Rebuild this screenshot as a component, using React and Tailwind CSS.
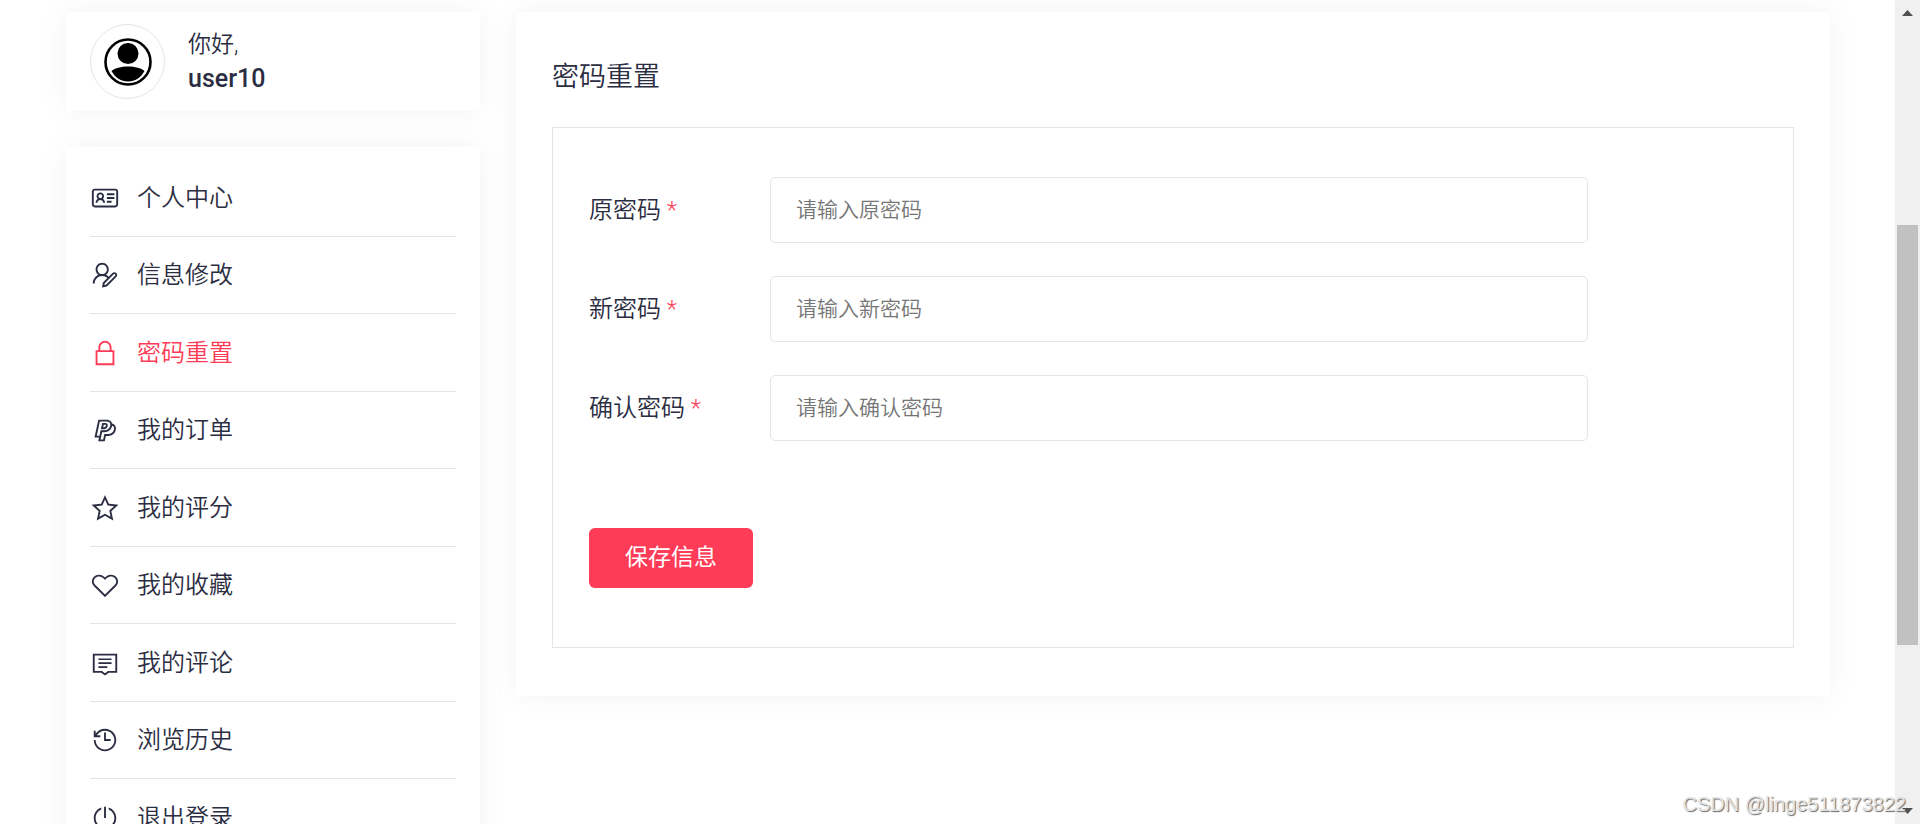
import {
    LiaIdCard, LiaUserEditSolid, LiaLockSolid, LiaPaypal, LiaStar, LiaHeart,
    LiaHistorySolid, LiaPowerOffSolid
} from 'react-icons/lia'

function IconeComentario({ className }) {
    return (
        <svg viewBox="0 0 32 32" className={className} fill="none" stroke="currentColor" strokeWidth="2" aria-hidden="true">
            <path d="M4 7h24v18.500h-8.500L16 28.200l-3.500-2.700H4z" />
            <path d="M9 12h14M9 16.200h14M9 20.300h9.500" strokeWidth="1.800" />
        </svg>
    )
}

const menu = [
    { texto: '个人中心', Icone: LiaIdCard },
    { texto: '信息修改', Icone: LiaUserEditSolid },
    { texto: '密码重置', Icone: LiaLockSolid, ativo: true },
    { texto: '我的订单', Icone: LiaPaypal },
    { texto: '我的评分', Icone: LiaStar },
    { texto: '我的收藏', Icone: LiaHeart },
    { texto: '我的评论', Icone: IconeComentario },
    { texto: '浏览历史', Icone: LiaHistorySolid },
    { texto: '退出登录', Icone: LiaPowerOffSolid }
]

const campos = [
    { id: 'senhaAtual', label: '原密码', placeholder: '请输入原密码' },
    { id: 'senhaNova', label: '新密码', placeholder: '请输入新密码' },
    { id: 'senhaConfirmada', label: '确认密码', placeholder: '请输入确认密码' }
]

function Avatar() {
    return (
        <div className="w-[75px] h-[75px] shrink-0 rounded-full border border-[#e5e5e5] flex items-center justify-center">
            <svg viewBox="0 0 48 48" className="w-12 h-12" aria-hidden="true">
                <circle cx="24" cy="24" r="22.5" fill="none" stroke="#000" strokeWidth="2.6" />
                <circle cx="24" cy="15.5" r="10.5" fill="#000" />
                <path d="M7.500 33C11 30 17 28.500 24 28.500s13 1.500 16.500 4.500C37 39.500 31 43.500 24 43.500S11 39.500 7.500 33z" fill="#000" />
            </svg>
        </div>
    )
}

function Sidebar() {
    return (
        <aside className="w-[414px] shrink-0 space-y-9">
            <div className="bg-white shadow-[0_0_30px_rgba(0,0,0,0.05)] px-6 py-3 flex items-center gap-[23px]">
                <Avatar />
                <div>
                    <p className="text-[23px] leading-[34px] font-[350]">你好,</p>
                    <p className="text-[25px] leading-[34px] font-medium">user10</p>
                </div>
            </div>
            <nav className="bg-white shadow-[0_0_30px_rgba(0,0,0,0.05)] px-6 py-3">
                <ul>
                    {menu.map(({ texto, Icone, ativo }) => (
                        <li key={texto} className="odd:h-[78px] even:h-[77px] border-b border-[#e5e5e5] last:border-b-0">
                            <a href="#" className={ativo ? 'h-full flex items-center gap-[17px] text-[#ff3c57]' : 'h-full flex items-center gap-[17px]'}>
                                <Icone className="w-[30px] h-[30px]" />
                                <span className="text-2xl font-[350]">{texto}</span>
                            </a>
                        </li>
                    ))}
                </ul>
            </nav>
        </aside>
    )
}

function Formulario() {
    return (
        <main className="flex-1 min-w-0 bg-white shadow-[0_0_30px_rgba(0,0,0,0.05)] px-9 pt-[45px] pb-12">
            <h1 className="text-[27px] leading-[40px] font-[350] mb-[30px]">密码重置</h1>
            <form className="border border-[#e5e5e5] px-9 pt-[49px] pb-[59px]" onSubmit={(e) => e.preventDefault()}>
                <div className="space-y-[33px]">
                    {campos.map((campo) => (
                        <div key={campo.id} className="flex items-center">
                            <label htmlFor={campo.id} className="w-[181px] shrink-0 text-2xl font-[350]">
                                {campo.label} <span className="text-[#ff3c57]">*</span>
                            </label>
                            <input
                                id={campo.id}
                                type="password"
                                placeholder={campo.placeholder}
                                className="w-[70%] h-[66px] px-[25px] text-[21px] font-[350] border border-[#e5e5e5] rounded-[5px] outline-none placeholder:text-[#757575]"
                            />
                        </div>
                    ))}
                </div>
                <button className="mt-[87px] h-[60px] px-9 rounded-md bg-[#ff3c57] text-white text-[23px]">保存信息</button>
            </form>
        </main>
    )
}

function BarraRolagem() {
    return (
        <div className="w-[25px] shrink-0 bg-[#f0f0f0] flex flex-col items-center" aria-hidden="true">
            <svg viewBox="0 0 11 6" className="w-[11px] h-[6px] mt-[10px] shrink-0" fill="#505050"><path d="M5.500 0L11 6H0z" /></svg>
            <div className="mt-[209px] w-[21px] h-[420px] shrink-0 bg-[#c1c1c1]" />
            <svg viewBox="0 0 11 6" className="w-[11px] h-[6px] mt-auto mb-[10px] shrink-0" fill="#505050"><path d="M5.500 6L11 0H0z" /></svg>
        </div>
    )
}

export default function App() {
    return (
        <div className="relative h-screen overflow-hidden flex bg-white text-[#2b2d42] font-[Roboto,'Noto_Sans_CJK_SC',sans-serif]">
            <div className="flex-1 min-w-0 flex items-start gap-9 pt-3 pl-[66px] pr-[65px]">
                <Sidebar />
                <Formulario />
            </div>
            <BarraRolagem />
            <p className="absolute right-[14px] bottom-[5px] text-[20px] text-[#e4e4e4] [text-shadow:1px_1px_1px_#666] font-['Liberation_Sans',sans-serif]">CSDN @linge511873822</p>
        </div>
    )
}
